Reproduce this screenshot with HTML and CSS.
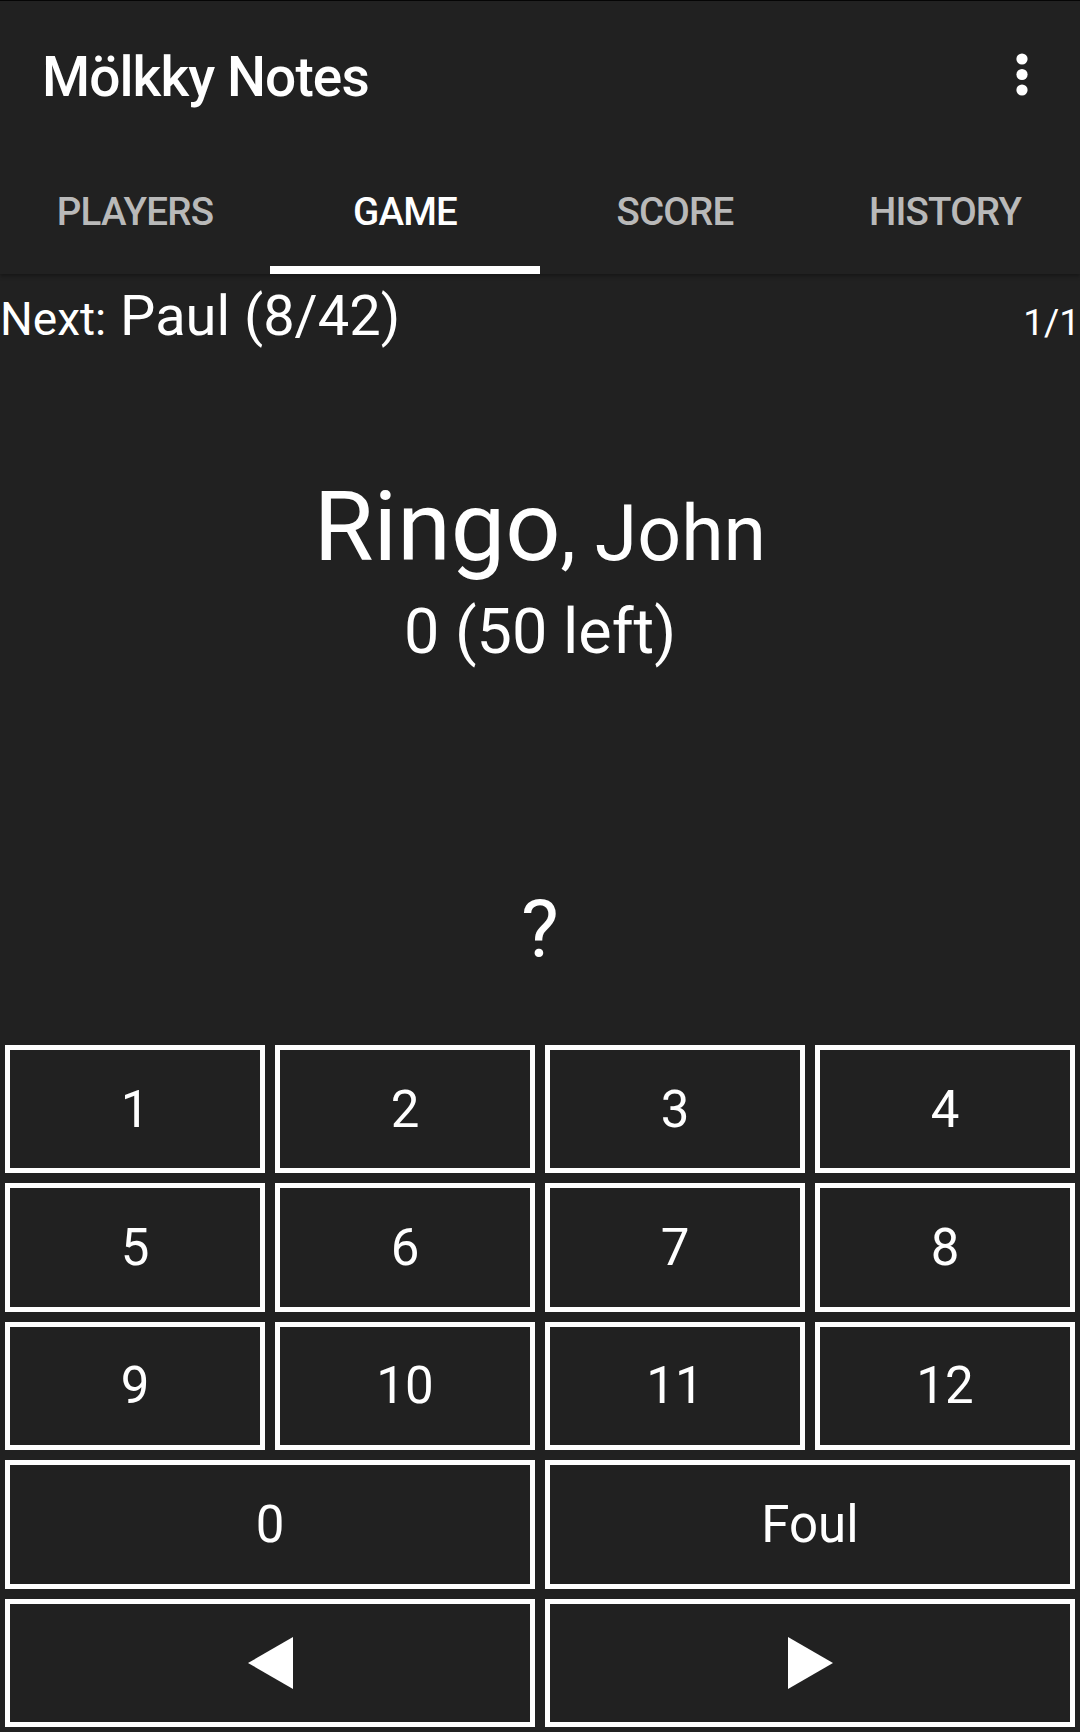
FILE: index.html
```html
<!DOCTYPE html>
<html>
<head>
<meta charset="utf-8">
<link rel="stylesheet" href="styles.css">
</head>
<body>
<div class="appbar">
  <div class="toolbar">
    <div class="title">Mölkky Notes</div>
    <svg class="menu" width="12" height="44" viewBox="0 0 12 44"><circle cx="6" cy="6" r="5.6" fill="#fff"/><circle cx="6" cy="21.5" r="5.6" fill="#fff"/><circle cx="6" cy="37" r="5.6" fill="#fff"/></svg>
  </div>
  <div class="tabs">
    <div class="tab">Players</div>
    <div class="tab active">Game</div>
    <div class="tab">Score</div>
    <div class="tab">History</div>
  </div>
</div>
<div class="main">
  <div class="nextrow">
    <div class="next"><span class="next-label">Next:</span> Paul (8/42)</div>
    <div class="round">1/1</div>
  </div>
  <div class="player">
    <div class="names"><span class="cur">Ringo</span><span class="others">, John</span></div>
    <div class="points">0 (50 left)</div>
  </div>
  <div class="throw">?</div>
  <div class="pad">
    <div class="btn">1</div>
    <div class="btn">2</div>
    <div class="btn">3</div>
    <div class="btn">4</div>
    <div class="btn">5</div>
    <div class="btn">6</div>
    <div class="btn">7</div>
    <div class="btn">8</div>
    <div class="btn">9</div>
    <div class="btn">10</div>
    <div class="btn">11</div>
    <div class="btn">12</div>
    <div class="btn wide">0</div>
    <div class="btn wide">Foul</div>
    <div class="btn wide"><svg width="45" height="52" viewBox="0 0 45 52"><polygon points="0,26 45,0 45,52" fill="#fff"/></svg></div>
    <div class="btn wide"><svg width="45" height="52" viewBox="0 0 45 52"><polygon points="45,26 0,0 0,52" fill="#fff"/></svg></div>
  </div>
</div>
</body>
</html>
```
FILE: styles.css
```css
html, body {
  margin: 0;
  padding: 0;
  background: #212121;
}
body {
  font-family: Roboto, "Noto Sans", sans-serif;
  color: #fff;
  width: 1080px;
  height: 1732px;
  overflow: hidden;
}
.appbar {
  background: #212121;
  border-top: 1px solid #050505;
  box-shadow: 0 2px 4px rgba(0, 0, 0, 0.35);
  position: relative;
  z-index: 1;
}
.toolbar {
  height: 141px;
  display: flex;
  justify-content: space-between;
  align-items: flex-start;
  padding-left: 42px;
}
.title {
  font-size: 55px;
  font-weight: 500;
  line-height: 55px;
  letter-spacing: -0.9px;
  margin-top: 49px;
}
.menu {
  margin-top: 52px;
  margin-right: 52px;
}
.tabs {
  height: 132px;
  display: grid;
  grid-template-columns: repeat(4, 1fr);
}
.tab {
  font-size: 38.5px;
  font-weight: 500;
  line-height: 38.5px;
  letter-spacing: -0.8px;
  text-transform: uppercase;
  text-align: center;
  color: rgba(255, 255, 255, 0.7);
  padding-top: 51px;
  box-sizing: border-box;
}
.tab.active {
  color: #fff;
  border-bottom: 8px solid #fff;
}
.main {
  height: 1458px;
  display: flex;
  flex-direction: column;
}
.nextrow {
  display: flex;
  justify-content: space-between;
  align-items: baseline;
  padding-top: 12px;
  padding-right: 0;
}
.next {
  font-size: 56px;
  line-height: 60px;
}
.next-label {
  font-size: 46px;
}
.round {
  font-size: 37px;
  line-height: 60px;
}
.player {
  margin-top: 114px;
  text-align: center;
}
.names {
  line-height: 120px;
  font-size: 97px;
}
.others {
  font-size: 77px;
}
.points {
  font-size: 63px;
  line-height: 90px;
  margin-top: -7px;
}
.throw {
  margin-top: 203px;
  font-size: 80px;
  line-height: 100px;
  text-align: center;
}
.pad {
  margin-top: auto;
  padding: 5px;
  display: grid;
  grid-template-columns: repeat(4, 1fr);
  grid-template-rows: repeat(5, 1fr);
  gap: 10px;
  height: 692px;
  box-sizing: border-box;
}
.btn {
  border: 5px solid #fff;
  background: #212121;
  display: flex;
  align-items: center;
  justify-content: center;
  font-size: 51px;
  line-height: 1;
}
.btn.wide {
  grid-column: span 2;
}
```
